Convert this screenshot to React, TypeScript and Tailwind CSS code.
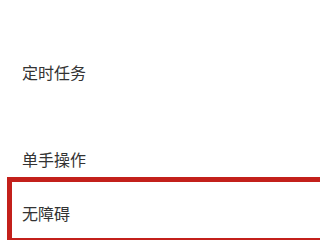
export default function App() {
  return (
    <div
      className="w-[320px] h-[240px] overflow-hidden bg-white text-[#333333] text-[16px] leading-[16px]"
      style={{ fontFamily: '"Noto Sans CJK SC", "Noto Sans", sans-serif' }}
    >
      <div className="pt-[64px] pl-[22px]">定时任务</div>
      <div className="mt-[71px] pl-[22px]">单手操作</div>
      <div className="mt-[10px] ml-[7px] w-[330px] h-[66px] border-[5px] border-[#c3201b] pt-[23px] pl-[10px]">
        无障碍
      </div>
    </div>
  );
}
